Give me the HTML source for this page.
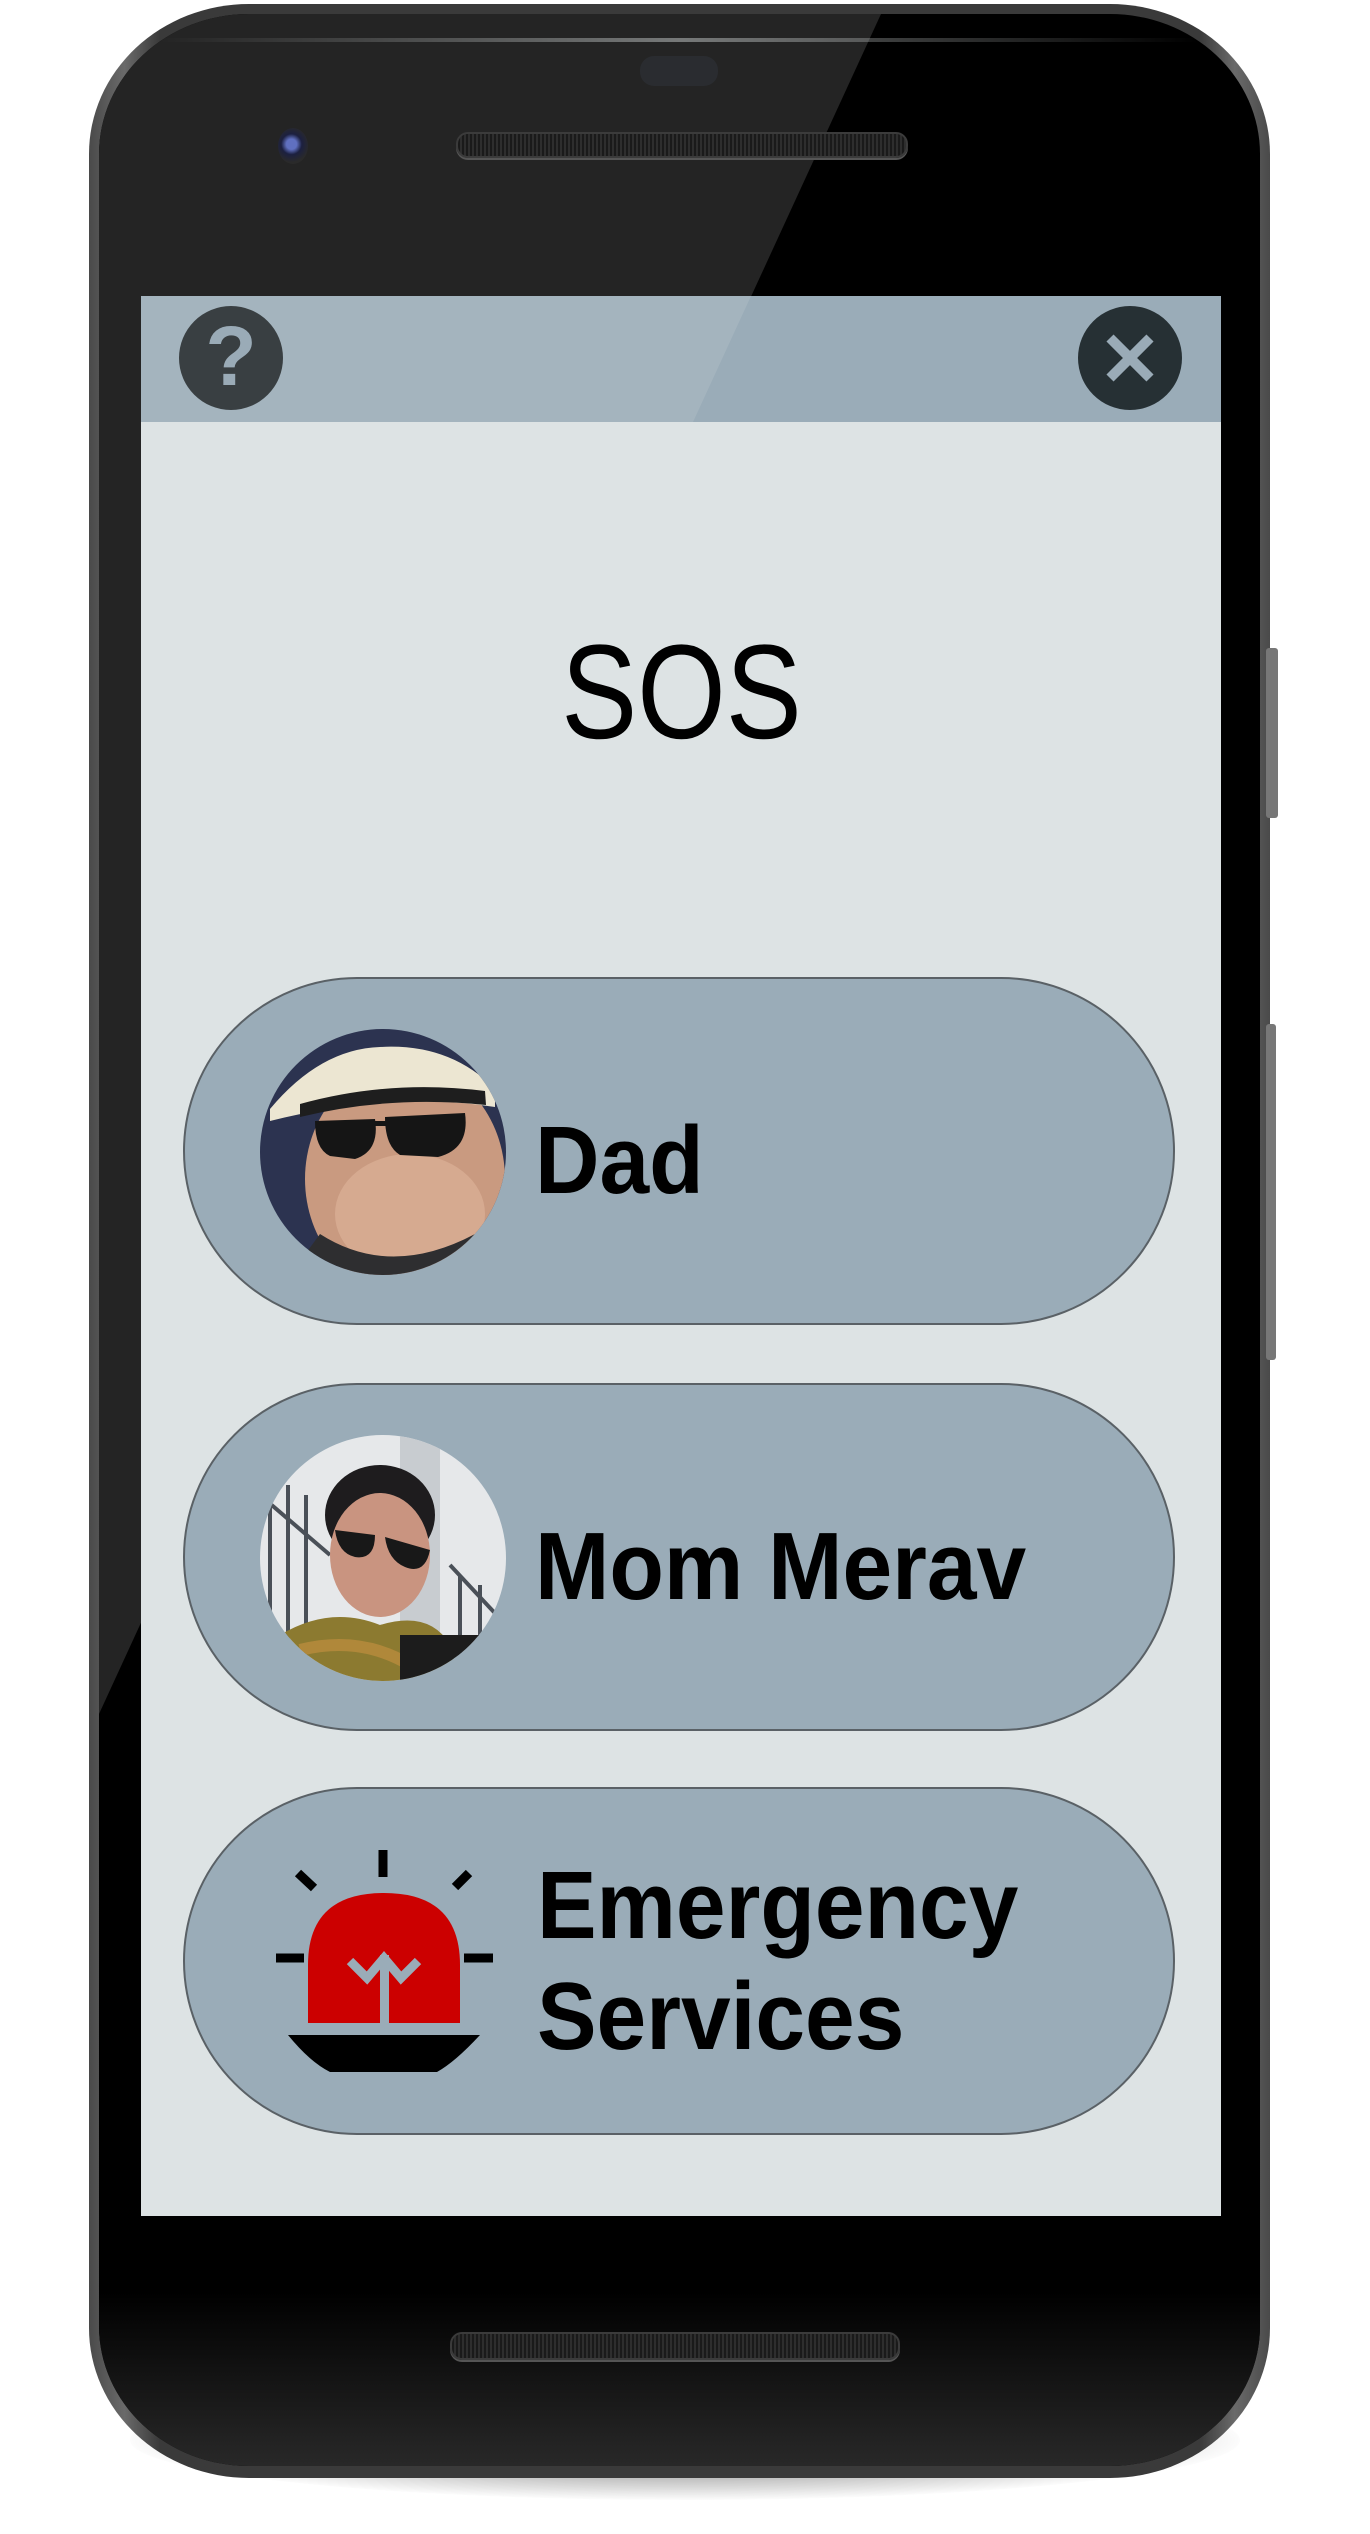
<!DOCTYPE html>
<html><head><meta charset="utf-8"><style>
html,body{margin:0;padding:0;background:#fff;}
body{width:1370px;height:2534px;position:relative;overflow:hidden;font-family:"Liberation Sans",sans-serif;}
.abs{position:absolute;}
.shadow{left:130px;top:2380px;width:1110px;height:120px;border-radius:50%;background:radial-gradient(ellipse at center,rgba(0,0,0,.55) 0%,rgba(0,0,0,.25) 45%,rgba(0,0,0,0) 72%);}
.frame{left:89px;top:4px;width:1181px;height:2474px;border-radius:160px/150px;background:linear-gradient(90deg,#4a4a4a,#6a6a6a 3%,#3a3a3a 6%,#3a3a3a 94%,#6a6a6a 97%,#4a4a4a);}
.body{left:99px;top:14px;width:1161px;height:2452px;border-radius:150px/140px;background:#000;overflow:hidden;}
.botfade{left:0;top:2200px;width:1161px;height:260px;background:linear-gradient(180deg,#000 0%,#000 30%,#2a2a2a 100%);}
.screen{left:141px;top:296px;width:1080px;height:1920px;background:#dde3e4;overflow:hidden;}
.btn{left:42px;width:992px;height:348px;border-radius:174px;background:#9aacb8;border:2px solid #5a6166;box-sizing:border-box;}
.name{font-weight:bold;font-size:96px;color:#000;line-height:1;white-space:nowrap;transform:scaleX(0.93);transform-origin:left;}
.spk{border-radius:12px;background:repeating-linear-gradient(90deg,#1a1a1a 0 2px,#2e2e2e 2px 4px);border:2px solid #3b3b3b;box-shadow:0 2px 0 #555;}
</style></head><body>
<div class="abs shadow"></div>
<div class="abs frame"></div>
<div class="abs" style="left:1266px;top:648px;width:12px;height:170px;background:#777;border-radius:3px;"></div>
<div class="abs" style="left:1266px;top:1024px;width:10px;height:336px;background:#777;border-radius:3px;"></div>
<div class="abs body">
  <svg class="abs" style="left:0;top:0" width="1161" height="2452"><polygon points="0,0 782,0 0,1700" fill="#242424"/></svg>
  <div class="abs botfade"></div>
  <div class="abs" style="left:60px;top:24px;width:1040px;height:4px;background:linear-gradient(90deg,rgba(255,255,255,0),rgba(200,205,205,.5),rgba(255,255,255,0));border-radius:2px;"></div>
  <div class="abs" style="left:541px;top:42px;width:78px;height:30px;border-radius:14px;background:#2a2c30;"></div>
  <div class="abs spk" style="left:357px;top:118px;width:448px;height:22px;"></div>
  <div class="abs" style="left:179px;top:114px;width:30px;height:36px;border-radius:50%;background:radial-gradient(circle at 45% 45%,#6070c0 0 20%,#1c2040 40%,#2a2a2a 70%);"></div>
  <div class="abs spk" style="left:351px;top:2318px;width:446px;height:24px;"></div>
</div>
<div class="abs screen">
  <svg class="abs" style="left:0;top:0" width="1080" height="126"><rect width="1080" height="126" fill="#9aacb8"/><polygon points="0,0 610,0 552,126 0,126" fill="#a4b4be"/></svg>
  <div class="abs" style="left:38px;top:10px;width:104px;height:104px;border-radius:50%;background:#393f42;"></div>
  <div class="abs" style="left:38px;top:18px;width:104px;text-align:center;font-size:84px;font-weight:bold;color:#9aabb7;line-height:1;">?</div>
  <div class="abs" style="left:937px;top:10px;width:104px;height:104px;border-radius:50%;background:#263034;"></div>
  <svg class="abs" style="left:937px;top:10px" width="104" height="104"><path d="M32 32 L72 72 M72 32 L32 72" stroke="#9aabb7" stroke-width="10"/></svg>
  <div class="abs" style="left:0;top:330px;width:1080px;text-align:center;font-size:134px;line-height:1;color:#000;"><span style="display:inline-block;transform:scaleX(0.85);">SOS</span></div>

  <div class="abs btn" style="top:681px;"></div>
  <svg class="abs" style="left:119px;top:733px" width="246" height="246">
    <defs><clipPath id="c1"><circle cx="123" cy="123" r="123"/></clipPath></defs>
    <g clip-path="url(#c1)">
      <rect width="246" height="246" fill="#2c3350"/>
      <ellipse cx="145" cy="150" rx="100" ry="115" fill="#c99a80"/>
      <ellipse cx="150" cy="185" rx="75" ry="60" fill="#d6aa90"/>
      <path d="M30 246 L60 205 Q130 250 215 205 L246 246 Z" fill="#2e2e30"/>
      <path d="M10 80 Q60 20 120 18 Q190 14 235 60 L235 78 Q130 62 10 92 Z" fill="#ece6d2"/>
      <path d="M40 75 Q130 50 225 62 L226 76 Q130 66 40 88 Z" fill="#1e1e1e"/>
      <path d="M55 92 L115 90 Q120 122 95 130 L70 127 Q55 120 55 92 Z" fill="#151515"/>
      <path d="M125 88 L205 84 Q210 120 178 128 L140 126 Q125 117 125 88 Z" fill="#151515"/>
      <rect x="110" y="92" width="20" height="5" fill="#151515"/>
    </g>
  </svg>
  <div class="abs name" style="left:394px;top:817px;">Dad</div>

  <div class="abs btn" style="top:1087px;"></div>
  <svg class="abs" style="left:119px;top:1139px" width="246" height="246">
    <defs><clipPath id="c2"><circle cx="123" cy="123" r="123"/></clipPath></defs>
    <g clip-path="url(#c2)">
      <rect width="246" height="246" fill="#e6e8ea"/>
      <rect x="140" y="0" width="40" height="246" fill="#c8ccd0"/>
      <g stroke="#4a5058" stroke-width="4"><line x1="10" y1="40" x2="10" y2="246"/><line x1="28" y1="50" x2="28" y2="246"/><line x1="46" y1="60" x2="46" y2="246"/><line x1="0" y1="60" x2="70" y2="120"/><line x1="190" y1="130" x2="246" y2="190"/><line x1="200" y1="140" x2="200" y2="246"/><line x1="220" y1="150" x2="220" y2="246"/></g>
      <ellipse cx="120" cy="80" rx="55" ry="50" fill="#1e1c1e"/>
      <ellipse cx="120" cy="120" rx="50" ry="62" fill="#c99480"/>
      <path d="M75 95 L115 100 Q115 125 95 122 Q78 118 75 95 Z M125 102 L170 115 Q165 140 145 132 Q128 125 125 102 Z" fill="#181818"/>
      <path d="M20 200 Q70 170 120 190 Q170 175 190 210 L200 246 L20 246 Z" fill="#8c7a30"/>
      <path d="M40 215 Q100 200 150 230" stroke="#b0883a" stroke-width="12" fill="none"/>
      <rect x="140" y="200" width="80" height="46" fill="#1c1c1c"/>
    </g>
  </svg>
  <div class="abs name" style="left:394px;top:1223px;">Mom Merav</div>

  <div class="abs btn" style="top:1491px;"></div>
  <svg class="abs" style="left:119px;top:1524px" width="260" height="260" viewBox="260 1820 260 260">
    <g stroke="#000" stroke-width="9">
      <line x1="383" y1="1850" x2="383" y2="1877"/>
      <line x1="298" y1="1873" x2="314" y2="1888"/>
      <line x1="469" y1="1873" x2="455" y2="1887"/>
      <line x1="276" y1="1958" x2="304" y2="1958"/>
      <line x1="464" y1="1958" x2="493" y2="1958"/>
    </g>
    <path d="M308 2023 L308 1965 Q308 1893 384 1893 Q460 1893 460 1965 L460 2023 Z" fill="#cc0000"/>
    <rect x="380" y="1955" width="9" height="70" fill="#9aacb8"/>
    <path d="M350 1961 L367 1978 L384 1958 L401 1978 L418 1961" stroke="#9aacb8" stroke-width="9" fill="none"/>
    <path d="M288 2035 L480 2035 Q455 2062 437 2072 L330 2072 Q310 2062 288 2035 Z" fill="#000"/>
  </svg>
  <div class="abs name" style="left:396px;top:1562px;">Emergency</div>
  <div class="abs name" style="left:396px;top:1673px;">Services</div>
</div>
</body></html>
